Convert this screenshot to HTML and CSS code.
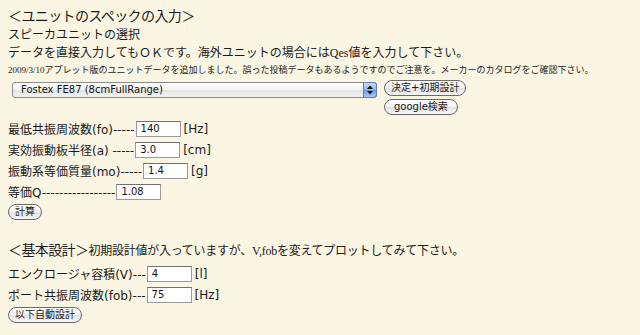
FILE: index.html
```html
<!DOCTYPE html>
<html lang="ja">
<head>
<meta charset="utf-8">
<title>ユニットのスペックの入力</title>
<link rel="stylesheet" href="styles.css">
</head>
<body>
<h1 class="title">＜ユニットのスペックの入力＞</h1>
<p class="line">スピーカユニットの選択</p>
<p class="line">データを直接入力してもＯＫです。海外ユニットの場合にはQes値を入力して下さい。</p>
<p class="note">2009/3/10アプレット版のユニットデータを追加しました。誤った投稿データもあるようですのでご注意を。メーカーのカタログをご確認下さい。</p>
<div class="unit-row">
  <div class="select">
    <span class="select-text">Fostex FE87 (8cmFullRange)</span>
    <span class="select-arrow">
      <svg width="6" height="10" viewBox="0 0 6 10"><path d="M0 4 L3 0.5 L6 4 Z M0 6 L3 9.5 L6 6 Z" fill="#111"/></svg>
    </span>
  </div>
  <div class="btn-col">
    <button class="btn">決定+初期設計</button>
    <button class="btn btn-wide">google検索</button>
  </div>
</div>
<div class="form">
  <div class="row"><span class="lbl">最低共振周波数(fo)-----</span><input class="field" value="140"><span class="unit">[Hz]</span></div>
  <div class="row"><span class="lbl">実効振動板半径(a) -----</span><input class="field" value="3.0"><span class="unit">[cm]</span></div>
  <div class="row"><span class="lbl">振動系等価質量(mo)-----</span><input class="field" value="1.4"><span class="unit">[g]</span></div>
  <div class="row"><span class="lbl">等価Q-----------------</span><input class="field" value="1.08"></div>
</div>
<button class="btn btn-solo">計算</button>
<p class="basic"><span class="basic-head">＜基本設計＞</span><span class="basic-text">初期設計値が入っていますが、V,fobを変えてプロットしてみて下さい。</span></p>
<div class="form">
  <div class="row"><span class="lbl">エンクロージャ容積(V)---</span><input class="field" value="4"><span class="unit">[l]</span></div>
  <div class="row"><span class="lbl">ポート共振周波数(fob)---</span><input class="field" value="75"><span class="unit">[Hz]</span></div>
</div>
<button class="btn btn-solo">以下自動設計</button>
</body>
</html>
```
FILE: styles.css
```css
html, body {
  margin: 0;
  padding: 0;
  background: #fbf5e4;
}
body {
  padding: 8px;
  color: #1a1a1a;
  font-family: "Liberation Serif", "Noto Sans CJK JP", serif;
}
.title {
  margin: 0;
  font-weight: normal;
  font-size: 14px;
  line-height: 18px;
  letter-spacing: -0.6px;
}
.line {
  margin: 0;
  font-size: 12px;
  line-height: 18px;
}
.note {
  margin: 0;
  font-size: 9px;
  line-height: 16px;
}
.unit-row {
  display: flex;
  align-items: flex-start;
  gap: 7px;
  margin-top: 2px;
  padding-left: 4px;
}
.select {
  position: relative;
  box-sizing: border-box;
  width: 365px;
  height: 16px;
  margin-top: 2px;
  border: 1px solid #8a8a8a;
  border-radius: 3px;
  background: linear-gradient(#ffffff, #f1f1f1 50%, #e2e2e2 51%, #f4f4f4);
  font-family: "DejaVu Sans", "Noto Sans CJK JP", sans-serif;
  font-size: 10px;
  line-height: 14px;
  padding-left: 8px;
  color: #111;
}
.select-arrow {
  position: absolute;
  top: -1px;
  right: -1px;
  width: 14px;
  height: 16px;
  box-sizing: border-box;
  border: 1px solid #5b7fb8;
  border-radius: 0 3px 3px 0;
  background: linear-gradient(#c9dcf6, #8fb4ea 50%, #6a98df 51%, #a9c9f3);
  display: flex;
  align-items: center;
  justify-content: center;
}
.btn-col {
  display: flex;
  flex-direction: column;
  align-items: flex-start;
  gap: 3px;
}
.btn {
  box-sizing: border-box;
  height: 16px;
  margin: 0;
  padding: 0 6px;
  border: 1px solid #6a6a6a;
  border-radius: 8px;
  background: linear-gradient(#ffffff, #f2f2f2 50%, #e1e1e1 51%, #f6f6f6);
  font-family: "DejaVu Sans", "Noto Sans CJK JP", sans-serif;
  font-size: 10px;
  line-height: 14px;
  color: #1a1a1a;
}
.btn-wide {
  padding: 0 9px;
}
.form {
  margin-top: 3px;
}
.row {
  display: flex;
  align-items: center;
  height: 21px;
  font-family: "DejaVu Sans", "Noto Sans CJK JP", sans-serif;
  font-size: 12px;
}
.lbl {
  white-space: pre;
  margin-right: 1px;
}
.field {
  box-sizing: border-box;
  width: 45px;
  height: 16px;
  margin: 0;
  padding: 0 0 0 4px;
  border: 1px solid #9a9a9a;
  border-top-color: #6f6f6f;
  background: #fff;
  font-family: "DejaVu Sans", sans-serif;
  font-size: 10px;
  color: #111;
}
.unit {
  margin-left: 3px;
}
.btn-solo {
  display: block;
  margin-top: 2px;
}
.basic {
  margin: 20px 0 0;
  font-size: 12px;
  line-height: 18px;
}
.basic-head {
  font-family: "Noto Sans CJK JP", sans-serif;
  font-size: 14px;
  letter-spacing: -0.6px;
}
.basic-text {
  letter-spacing: -0.25px;
}
```
